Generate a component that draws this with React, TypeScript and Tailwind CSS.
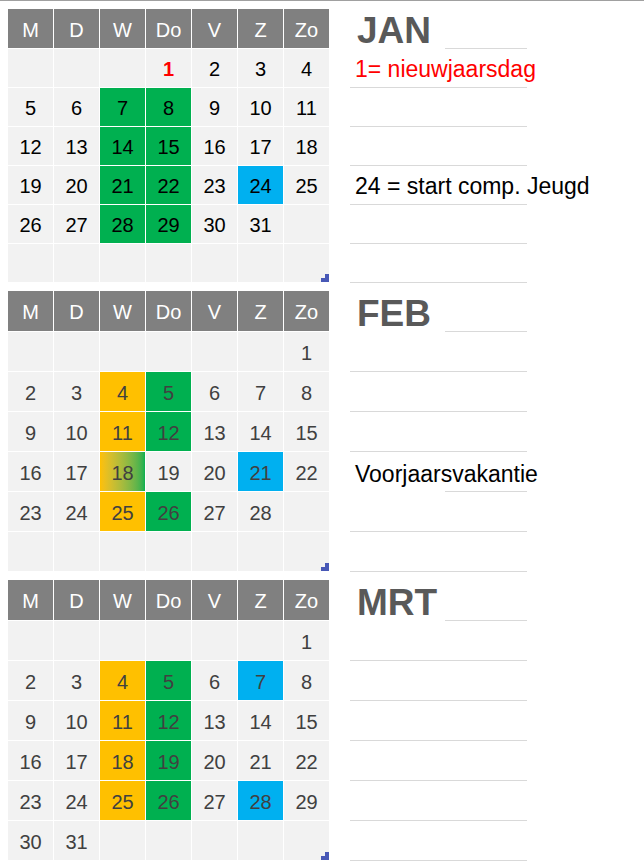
const DAYS = ["M", "D", "W", "Do", "V", "Z", "Zo"];

const BG: Record<string, string> = {
  g: "bg-[#00b050]",
  y: "bg-[#ffc000]",
  b: "bg-[#00b0f0]",
  gy: "bg-linear-to-r from-[#ffc000] to-[#00b050]",
};

type Note = { text: string; red?: boolean; half?: boolean };

type MonthProps = {
  name: string;
  offset: number;
  total: number;
  colors: Record<number, string>;
  redDay?: number;
  ink: string;
  headH: string;
  rowH: string;
  sideHeadH: string;
  sideRowH: string;
  notes: Record<number, Note>;
};

const Corner = () => (
  <svg className="absolute right-0 bottom-0" width="8" height="8" viewBox="0 0 8 8">
    <path d="M4 0H8V8H0V4H4Z" fill="#4858b6" />
  </svg>
);

const Month = ({ name, offset, total, colors, redDay, ink, headH, rowH, sideHeadH, sideRowH, notes }: MonthProps) => {
  const cells = Array.from({ length: 42 }, (_, i) => {
    const n = i - offset + 1;
    return n >= 1 && n <= total ? n : null;
  });

  return (
    <div className="flex items-start">
      {/* calendar */}
      <div className="grid grid-cols-[repeat(7,45px)] gap-px w-[321px] bg-white">
        {DAYS.map((d) => (
          <div key={d} className={`${headH} flex items-center justify-center pt-0.5 bg-[#808080] text-white text-[20px] leading-none`}>
            {d}
          </div>
        ))}
        {cells.map((n, i) => (
          <div
            key={i}
            className={`${rowH} relative flex items-center justify-center pt-0.5 text-[20px] leading-none ${
              n && colors[n] ? BG[colors[n]] : "bg-[#f2f2f2]"
            } ${n === redDay ? "text-[#ff0000] font-bold" : ink}`}
          >
            {n}
            {i === 41 && <Corner />}
          </div>
        ))}
      </div>

      {/* notes */}
      <div className="ml-[21px] w-[177px] flex flex-col">
        <div className={`${sideHeadH} flex`}>
          <div className="w-[95px] flex items-end pl-[7px] text-[37px] leading-none font-bold text-[#595959]">{name}</div>
          <div className="flex-1 border-b border-[#d9d9d9]" />
        </div>
        {[0, 1, 2, 3, 4, 5].map((r) => {
          const note = notes[r];
          return (
            <div key={r} className={`${sideRowH} flex`}>
              <div
                className={`w-[95px] flex items-end pl-[5px] pb-[5px] whitespace-nowrap text-[23px] leading-[26px] ${
                  note?.half ? "" : "border-b border-[#d9d9d9]"
                } ${note?.red ? "text-[#ff0000]" : "text-black"}`}
              >
                {note?.text}
              </div>
              <div className="flex-1 border-b border-[#d9d9d9]" />
            </div>
          );
        })}
      </div>
    </div>
  );
};

export default function App() {
  return (
    <div className="min-h-screen bg-white border-t border-[#a0a0a0] pt-2 pl-2 font-['Liberation_Sans',Arial,sans-serif]">
      <div className="flex flex-col gap-2">
        <Month
          name="JAN"
          offset={3}
          total={31}
          colors={{ 7: "g", 8: "g", 14: "g", 15: "g", 21: "g", 22: "g", 28: "g", 29: "g", 24: "b" }}
          redDay={1}
          ink="text-black"
          headH="h-[39px]"
          rowH="h-[38px]"
          sideHeadH="h-[40px]"
          sideRowH="h-[39px]"
          notes={{ 0: { text: "1= nieuwjaarsdag", red: true }, 3: { text: "24 = start comp. Jeugd" } }}
        />
        <Month
          name="FEB"
          offset={6}
          total={28}
          colors={{ 4: "y", 11: "y", 18: "gy", 25: "y", 5: "g", 12: "g", 26: "g", 21: "b" }}
          ink="text-[#404040]"
          headH="h-[40px]"
          rowH="h-[39px]"
          sideHeadH="h-[41px]"
          sideRowH="h-[40px]"
          notes={{ 3: { text: "Voorjaarsvakantie", half: true } }}
        />
        <Month
          name="MRT"
          offset={6}
          total={31}
          colors={{ 4: "y", 11: "y", 18: "y", 25: "y", 5: "g", 12: "g", 19: "g", 26: "g", 7: "b", 28: "b" }}
          ink="text-[#404040]"
          headH="h-[40px]"
          rowH="h-[39px]"
          sideHeadH="h-[41px]"
          sideRowH="h-[40px]"
          notes={{}}
        />
      </div>
    </div>
  );
}
